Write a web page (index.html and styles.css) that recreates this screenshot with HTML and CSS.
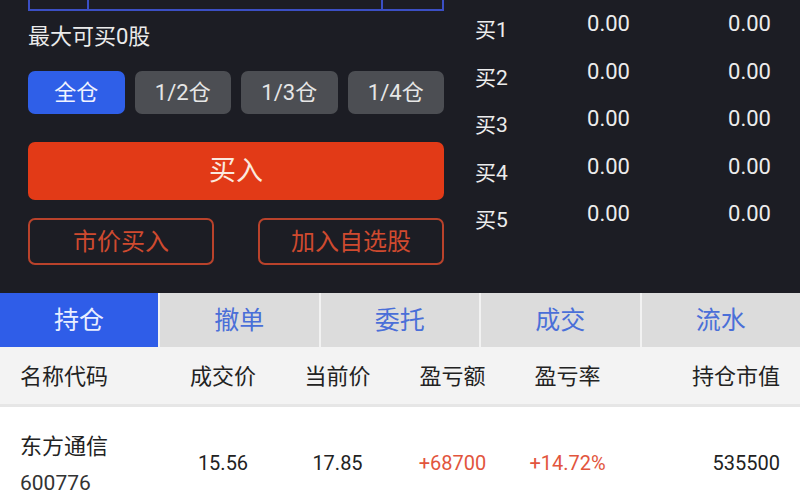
FILE: index.html
```html
<!DOCTYPE html>
<html lang="zh">
<head>
<meta charset="utf-8">
<link rel="stylesheet" href="styles.css">
</head>
<body>
<div class="top">
  <div class="left">
    <div class="input-box">
      <div class="cell c1"></div>
      <div class="cell c2"></div>
      <div class="cell c3"></div>
    </div>
    <div class="max">最大可买0股</div>
    <div class="ratios">
      <div class="ratio active">全仓</div>
      <div class="ratio">1/2仓</div>
      <div class="ratio">1/3仓</div>
      <div class="ratio">1/4仓</div>
    </div>
    <div class="buy">买入</div>
    <div class="outline-row">
      <div class="outline">市价买入</div>
      <div class="outline">加入自选股</div>
    </div>
  </div>
  <div class="book">
    <div class="brow"><span class="bl">买1</span><span class="bv">0.00</span><span class="bv">0.00</span></div>
    <div class="brow"><span class="bl">买2</span><span class="bv">0.00</span><span class="bv">0.00</span></div>
    <div class="brow"><span class="bl">买3</span><span class="bv">0.00</span><span class="bv">0.00</span></div>
    <div class="brow"><span class="bl">买4</span><span class="bv">0.00</span><span class="bv">0.00</span></div>
    <div class="brow"><span class="bl">买5</span><span class="bv">0.00</span><span class="bv">0.00</span></div>
  </div>
</div>
<div class="tabs">
  <div class="tab active">持仓</div>
  <div class="tab">撤单</div>
  <div class="tab">委托</div>
  <div class="tab">成交</div>
  <div class="tab">流水</div>
</div>
<div class="grid head">
  <div class="name">名称代码</div>
  <div class="c">成交价</div>
  <div class="c">当前价</div>
  <div class="c">盈亏额</div>
  <div class="c">盈亏率</div>
  <div class="r">持仓市值</div>
</div>
<div class="grid data">
  <div class="name">
    <div class="sname">东方通信</div>
    <div class="code">600776</div>
  </div>
  <div class="c num">15.56</div>
  <div class="c num">17.85</div>
  <div class="c num red">+68700</div>
  <div class="c num red">+14.72%</div>
  <div class="r num">535500</div>
</div>
</body>
</html>
```
FILE: styles.css
```css
* { box-sizing: border-box; }
html, body {
  margin: 0;
  padding: 0;
  width: 800px;
  height: 500px;
  overflow: hidden;
  background: #ffffff;
  font-family: Roboto, "Noto Sans CJK SC", sans-serif;
}
.top {
  display: flex;
  height: 293px;
  background: #1c1d24;
}
.left {
  width: 460px;
  padding-left: 28px;
  padding-right: 16px;
}
.input-box {
  display: flex;
  height: 11px;
  border: 2px solid #3b4fc4;
  border-top: none;
}
.cell { height: 100%; }
.c1 { width: 59px; border-right: 2px solid #3b4fc4; }
.c2 { width: 294px; border-right: 2px solid #3b4fc4; }
.c3 { flex: 1; }
.max {
  margin-top: 14px;
  height: 24px;
  line-height: 24px;
  font-size: 22px;
  color: #ebebeb;
}
.ratios {
  display: flex;
  gap: 10px;
  margin-top: 22px;
}
.ratio {
  flex: 1;
  height: 43px;
  padding-bottom: 5px;
  border-radius: 7px;
  background: #4c4e53;
  color: #e6e6e6;
  font-size: 22px;
  display: flex;
  align-items: center;
  justify-content: center;
}
.ratio.active {
  background: #2f5fe8;
  color: #f0f3ff;
}
.buy {
  margin-top: 28px;
  height: 58px;
  padding-bottom: 6px;
  border-radius: 7px;
  background: #e23a17;
  color: #fbe9df;
  font-size: 27px;
  display: flex;
  align-items: center;
  justify-content: center;
}
.outline-row {
  display: flex;
  justify-content: space-between;
  margin-top: 18px;
}
.outline {
  width: 186px;
  height: 47px;
  padding-bottom: 5px;
  border: 2px solid #b9422b;
  border-radius: 7px;
  color: #cf4a2f;
  font-size: 24px;
  display: flex;
  align-items: center;
  justify-content: center;
}
.book {
  flex: 1;
  padding-left: 15px;
  padding-top: 7px;
}
.brow {
  display: grid;
  grid-template-columns: 70px 85px 141px;
  height: 47.5px;
}
.bl {
  padding-top: 11px;
  font-size: 21px;
  line-height: 24px;
  color: #ececec;
}
.bv {
  padding-top: 5px;
  font-size: 22px;
  line-height: 24px;
  color: #ececec;
  text-align: right;
}
.tabs {
  display: flex;
  height: 54px;
  background: #f2f2f2;
  gap: 2px;
}
.tab {
  flex: 1;
  padding-bottom: 5px;
  background: #dcdcdc;
  color: #4a6fd8;
  font-size: 25px;
  display: flex;
  align-items: center;
  justify-content: center;
}
.tab.active {
  flex: 0 0 158px;
  background: #2f5de8;
  color: #e8eeff;
}
.grid {
  display: grid;
  grid-template-columns: 146px 114px 115px 115px 115px 1fr;
  padding: 0 20px;
  align-items: center;
}
.head {
  height: 60px;
  padding-bottom: 3px;
  background: #f3f3f3;
  border-bottom: 3px solid #e6e6e6;
  font-size: 22px;
  color: #222;
}
.c { text-align: center; }
.r { text-align: right; }
.data {
  height: 110px;
  background: #fff;
  color: #222;
}
.sname {
  font-size: 22px;
  line-height: 26px;
  margin-top: 4px;
}
.code {
  font-size: 21px;
  line-height: 24px;
  margin-top: 11px;
  color: #333;
}
.num {
  font-size: 20px;
  margin-top: 2px;
}
.red { color: #e2553d; }
```
